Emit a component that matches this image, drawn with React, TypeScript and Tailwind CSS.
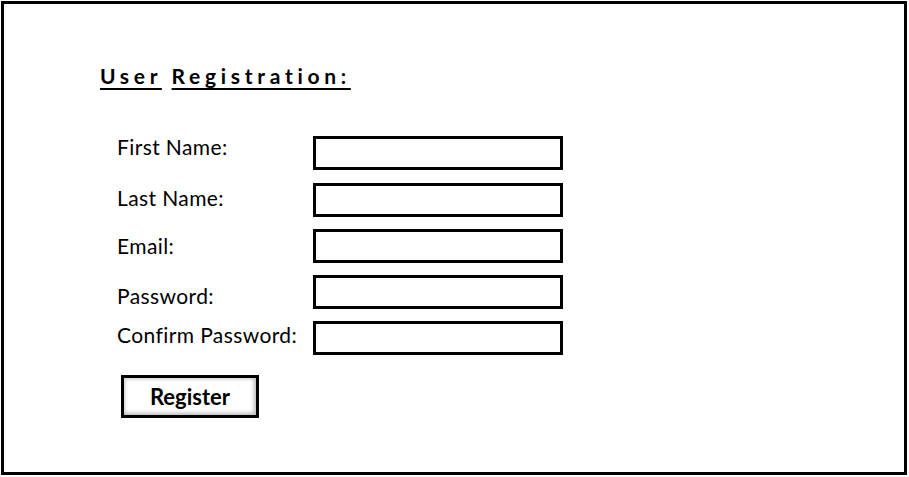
const fields = [
  { label: "First Name:", shift: "mb-[12px]" },
  { label: "Last Name:", shift: "mb-[4px]" },
  { label: "Email:", shift: "mb-0" },
  { label: "Password:", shift: "mt-[7px]" },
  { label: "Confirm Password:", shift: "mb-[6px]" },
];

export default function App() {
  return (
    <div className="h-[477px] w-[909px] bg-white p-px font-['Lato',_'Open_Sans',_sans-serif] text-black">
      <div className="h-[474px] w-[906px] border-[3px] border-black pl-[96px] pt-[60px]">
        <h1 className="text-[21px] font-bold leading-6 tracking-[4.7px]">
          <span className="underline decoration-2 underline-offset-[4px]">User</span>{" "}
          <span className="underline decoration-2 underline-offset-[4px]">Registration:</span>
        </h1>

        <div className="mt-[47px] ml-[17px] flex flex-col gap-3">
          {fields.map((f) => (
            <div key={f.label} className="flex items-center">
              <label className={`w-[196px] text-[21px] leading-6 tracking-[0.4px] ${f.shift}`}>{f.label}</label>
              <div className="h-[34px] w-[250px] border-[3px] border-black bg-white" />
            </div>
          ))}
        </div>

        <button className="mt-5 ml-[21px] flex h-[43px] w-[138px] items-center justify-center border-[3px] border-black bg-white text-[22px] font-bold shadow-[inset_-2px_-2px_4px_#b8b8b8,inset_2px_2px_3px_#e0e0e0]">
          Register
        </button>
      </div>
    </div>
  );
}
